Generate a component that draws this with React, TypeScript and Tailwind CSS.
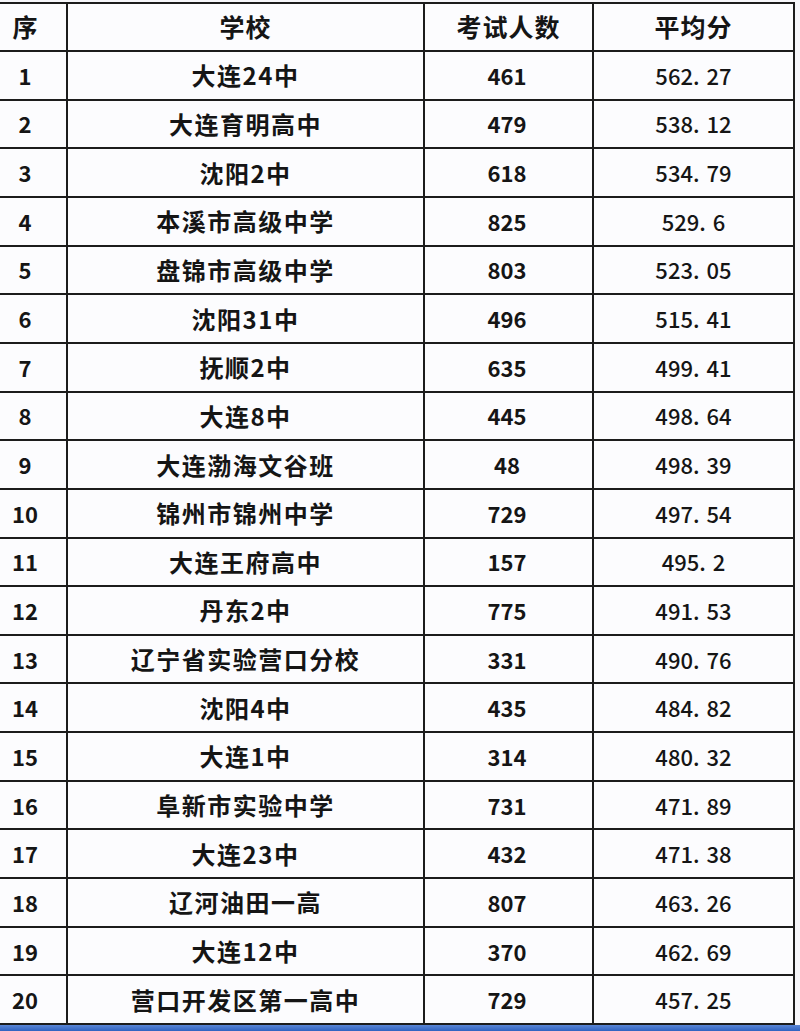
import React from "react";

const rows: [string, string, string, string][] = [
  ["1", "大连24中", "461", "562.27"],
  ["2", "大连育明高中", "479", "538.12"],
  ["3", "沈阳2中", "618", "534.79"],
  ["4", "本溪市高级中学", "825", "529.6"],
  ["5", "盘锦市高级中学", "803", "523.05"],
  ["6", "沈阳31中", "496", "515.41"],
  ["7", "抚顺2中", "635", "499.41"],
  ["8", "大连8中", "445", "498.64"],
  ["9", "大连渤海文谷班", "48", "498.39"],
  ["10", "锦州市锦州中学", "729", "497.54"],
  ["11", "大连王府高中", "157", "495.2"],
  ["12", "丹东2中", "775", "491.53"],
  ["13", "辽宁省实验营口分校", "331", "490.76"],
  ["14", "沈阳4中", "435", "484.82"],
  ["15", "大连1中", "314", "480.32"],
  ["16", "阜新市实验中学", "731", "471.89"],
  ["17", "大连23中", "432", "471.38"],
  ["18", "辽河油田一高", "807", "463.26"],
  ["19", "大连12中", "370", "462.69"],
  ["20", "营口开发区第一高中", "729", "457.25"],
];

function Score({ v }: { v: string }) {
  const [a, b] = v.split(".");
  return (
    <span>
      {a}
      <span className="mr-[7px]">.</span>
      {b}
    </span>
  );
}

const cell = "bg-[#fcfcfe] flex items-center justify-center";

export default function App() {
  return (
    <div
      className="w-[800px] h-[1031px] bg-[#f6f6fa] flex flex-col overflow-hidden text-[#151515]"
      style={{ fontFamily: '"Noto Sans CJK SC", "Noto Sans", sans-serif' }}
    >
      <div className="h-[2px] shrink-0" />
      <div className="flex shrink-0">
        <div
          className="grid grid-cols-[66px_355px_167px_199px] grid-rows-[46px_repeat(20,minmax(0,1fr))] gap-[2px] bg-[#1c1c1c] border-t-2 border-r-2 border-b-2 border-[#1c1c1c] h-[1023px] w-[795px]"
        >
          <div className={`${cell} pr-[16px] text-[25px] font-bold`}>序</div>
          <div className={`${cell} text-[25px] font-bold tracking-[1px]`}>学校</div>
          <div className={`${cell} text-[25px] font-bold tracking-[1px]`}>考试人数</div>
          <div className={`${cell} text-[25px] font-bold tracking-[1px]`}>平均分</div>
          {rows.map((r) => (
            <React.Fragment key={r[0]}>
              <div className={`${cell} pr-[16px] text-[22px] font-semibold`}>{r[0]}</div>
              <div className={`${cell} text-[24px] font-semibold tracking-[1.5px]`}>{r[1]}</div>
              <div className={`${cell} pr-[3px] text-[22px] font-semibold`}>{r[2]}</div>
              <div className={`${cell} text-[22px] font-medium`}>
                <Score v={r[3]} />
              </div>
            </React.Fragment>
          ))}
        </div>
      </div>
      <div className="flex-1 bg-gradient-to-b from-[#5a86d6] to-[#2f62c0]" />
    </div>
  );
}
